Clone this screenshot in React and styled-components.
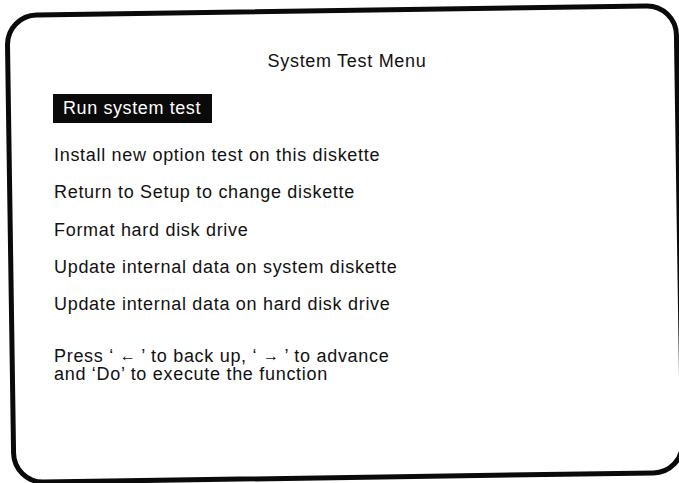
import React from "react";
import styled, { createGlobalStyle } from "styled-components";

const GlobalStyle = createGlobalStyle`
  html, body {
    margin: 0;
    padding: 0;
    background: #fff;
    overflow: hidden;
  }
  body {
    font-family: "Liberation Sans", Arial, Helvetica, sans-serif;
    color: #111;
  }
`;

const items = [
  "Install new option test on this diskette",
  "Return to Setup to change diskette",
  "Format hard disk drive",
  "Update internal data on system diskette",
  "Update internal data on hard disk drive",
];

function App() {
  return (
    <>
      <GlobalStyle />
      <Page>
        <Screen>
          <Title>System Test Menu</Title>
          <Selected>Run system test</Selected>
          <Menu>
            {items.map((label) => (
              <MenuItem key={label}>{label}</MenuItem>
            ))}
          </Menu>
          <Help>
            <span>
              Press ‘ <Arrow>←</Arrow> ’ to back up, ‘ <Arrow>→</Arrow> ’ to
              advance
            </span>
            <span>and ‘Do’ to execute the function</span>
          </Help>
        </Screen>
      </Page>
    </>
  );
}

export default App;

const Page = styled.div`
  width: 679px;
  height: 483px;
  padding: 8px 0 0 8px;
  box-sizing: border-box;
`;

// the frame of the scanned screen sits a little askew, so only the
// border is turned; the text stays level
const Screen = styled.div`
  position: relative;
  width: 674px;
  height: 472px;
  box-sizing: border-box;
  padding: 43px 0 0 46px;
  display: flex;
  flex-direction: column;
  align-items: flex-start;

  &::before {
    content: "";
    position: absolute;
    inset: 0;
    border: 5px solid #0a0a0a;
    border-radius: 32px;
    transform: rotate(-0.85deg);
    pointer-events: none;
  }
`;

const Title = styled.div`
  align-self: stretch;
  text-align: center;
  padding-right: 42px;
  font-size: 18px;
  line-height: 20px;
  letter-spacing: 0.7px;
`;

const Selected = styled.div`
  margin-top: 23px;
  margin-left: -1px;
  background: #0a0a0a;
  color: #fff;
  font-size: 18px;
  line-height: 29px;
  letter-spacing: 0.6px;
  padding: 0 11px 0 10px;
`;

const Menu = styled.ul`
  list-style: none;
  margin: 22px 0 0;
  padding: 0;
  display: flex;
  flex-direction: column;
  gap: 17.3px;
`;

const MenuItem = styled.li`
  font-size: 18px;
  line-height: 20px;
  letter-spacing: 0.7px;
`;

const Help = styled.div`
  margin-top: 33px;
  display: flex;
  flex-direction: column;
  font-size: 18px;
  line-height: 18px;
  letter-spacing: 0.7px;
`;

const Arrow = styled.span`
  font-size: 16px;
  vertical-align: 1px;
  letter-spacing: 0;
`;
